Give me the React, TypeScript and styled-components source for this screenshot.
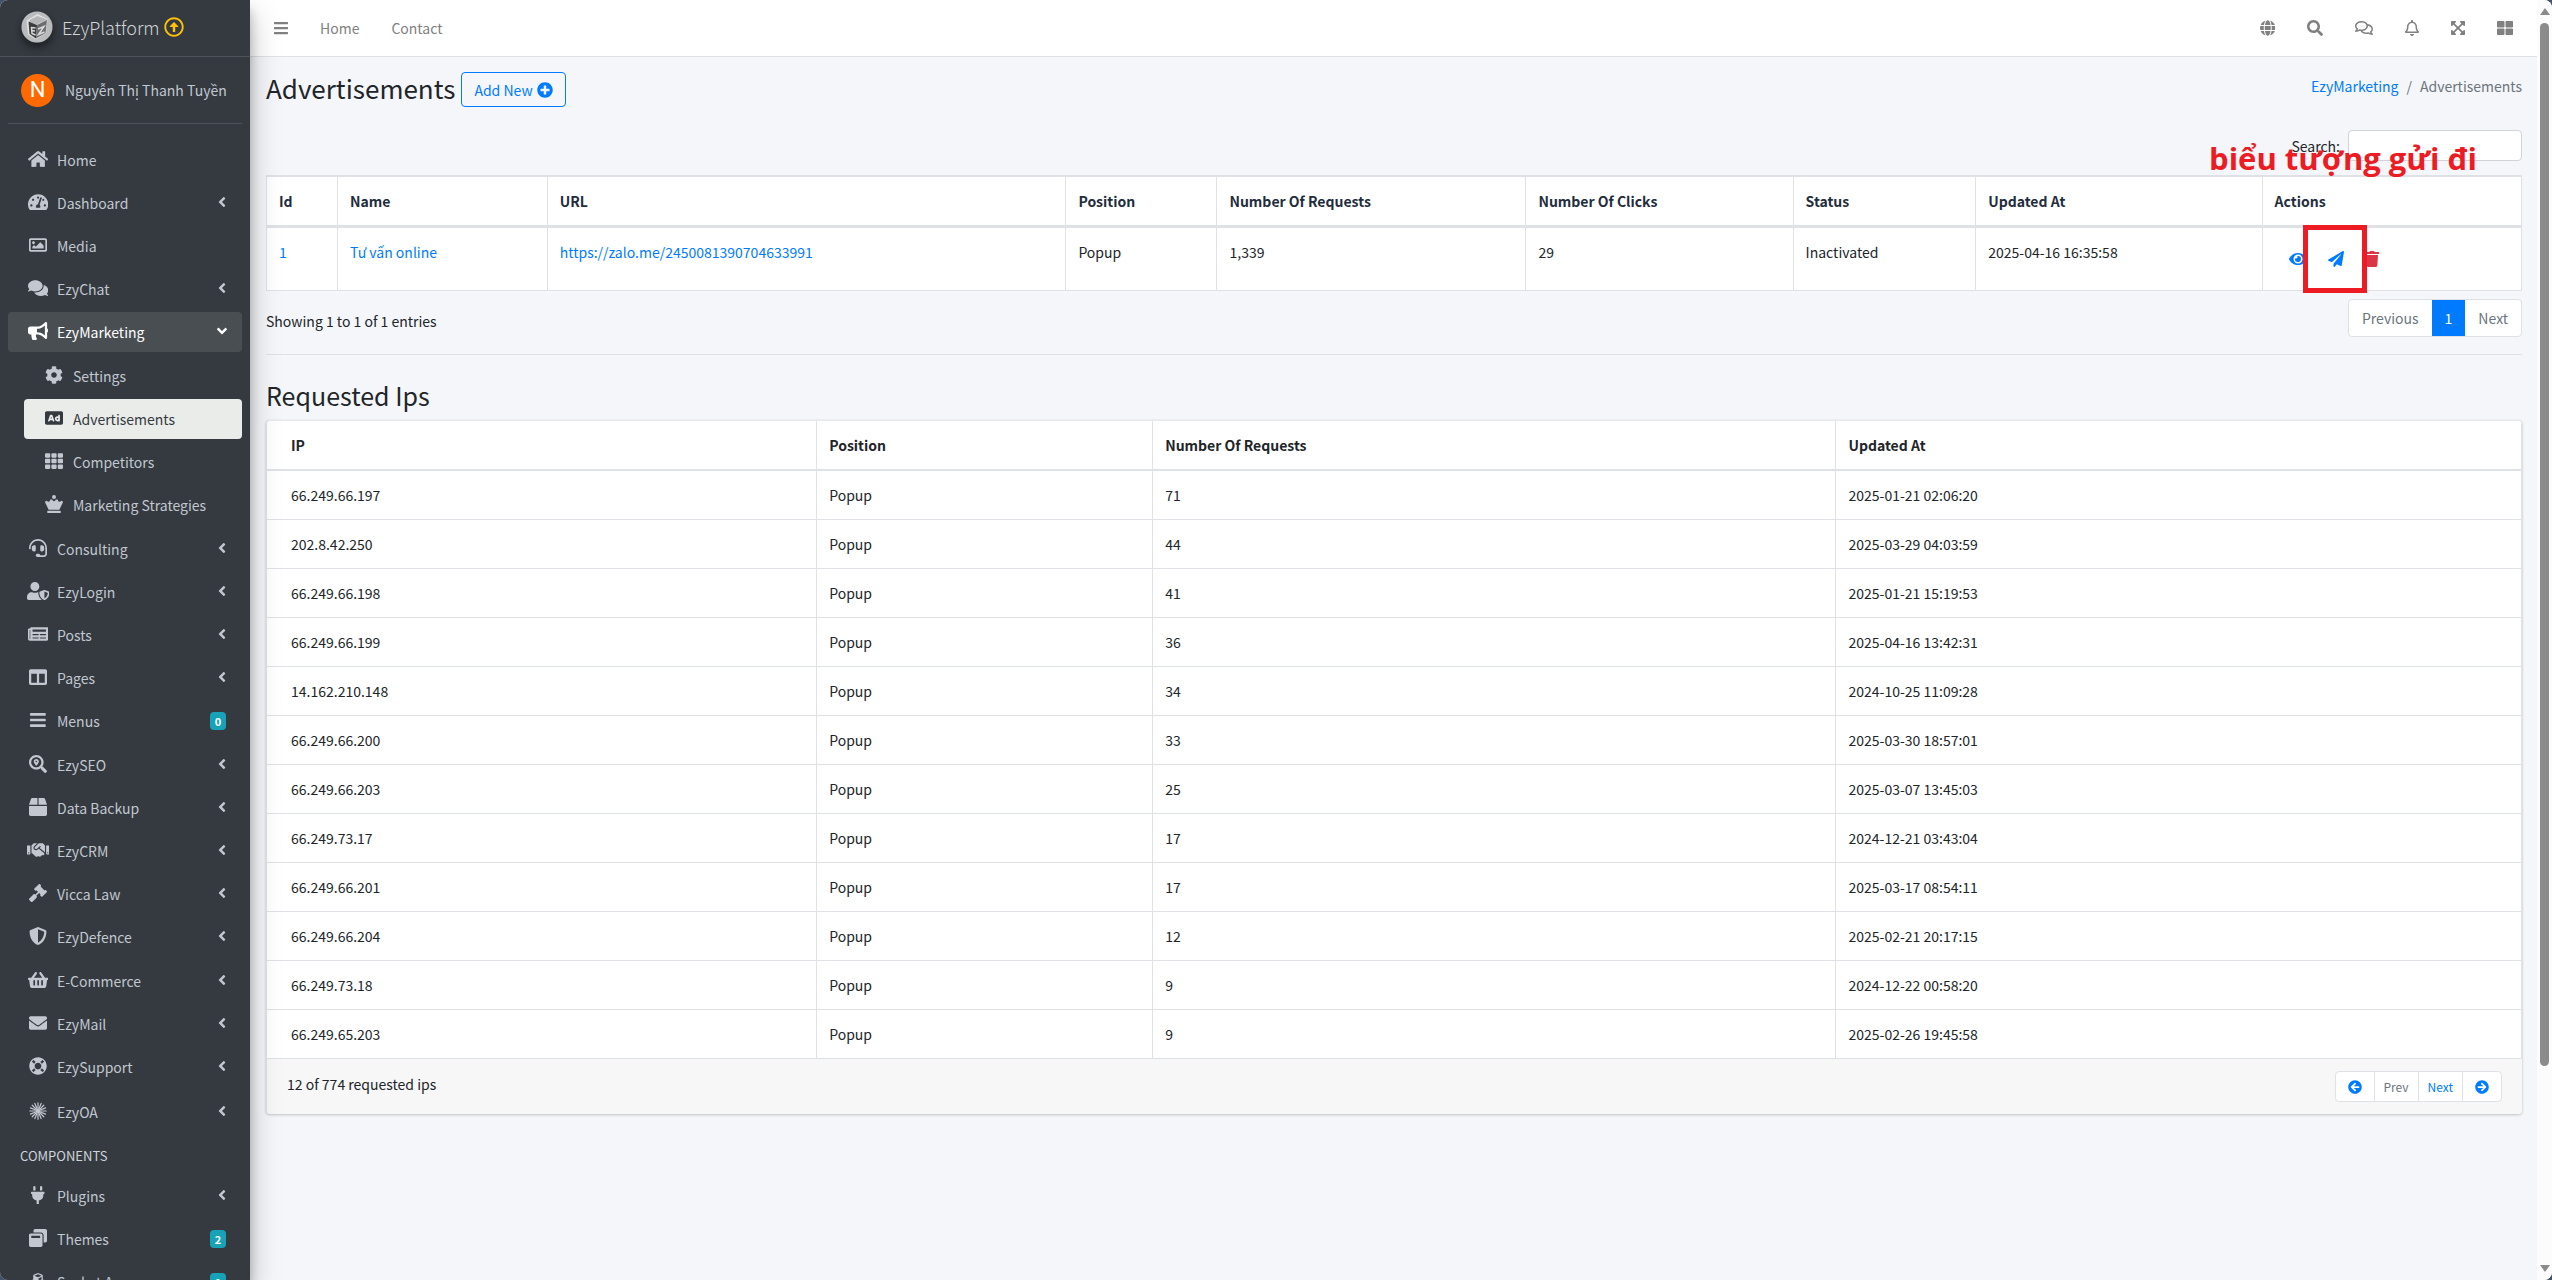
import React from 'react';
import styled, { createGlobalStyle, css } from 'styled-components';
import { IconContext } from 'react-icons';
import type { IconType } from 'react-icons';
import {
  FaAd, FaAngleLeft, FaArrowCircleLeft, FaArrowCircleRight, FaBars, FaBox, FaBullhorn, FaChessQueen,
  FaCog, FaColumns, FaComments, FaCubes, FaEnvelope, FaExpandArrowsAlt, FaEye, FaGavel, FaGlobe,
  FaHandshake, FaHeadset, FaHome, FaLifeRing, FaNewspaper, FaPaperPlane, FaPlug, FaPlusCircle,
  FaRegArrowAltCircleUp, FaRegBell, FaRegComments, FaRegImage, FaSearch, FaSearchLocation, FaShieldAlt,
  FaShoppingBasket, FaTachometerAlt, FaTh, FaThLarge, FaTrash, FaUserShield, FaWindowRestore,
} from 'react-icons/fa';

const color = {
  desktop: '#42536b',
  sidebar: '#343a40',
  sidebarLine: '#4b545c',
  sidebarText: '#c2c7d0',
  page: '#f4f6f9',
  line: '#dee2e6',
  text: '#212529',
  muted: '#6c757d',
  primary: '#007bff',
  danger: '#dc3545',
  info: '#17a2b8',
  mark: '#ed1c24',
};

const Global = createGlobalStyle`
  *, *::before, *::after { box-sizing: border-box; }
  body {
    margin: 0;
    background: ${color.desktop};
    color: ${color.text};
    font-family: "Noto Sans CJK SC", "Noto Sans", sans-serif;
    font-size: 14px;
    line-height: 24px;
  }
  button, input { font: inherit; color: inherit; }
  a { color: ${color.primary}; text-decoration: none; }
  svg { display: block; width: auto; height: 1em; flex: none; }
  ul, ol { list-style: none; margin: 0; padding: 0; }
`;

const Shell = styled.div`
  display: grid;
  grid-template-columns: 250px minmax(0, 1fr) 15px;
  height: 100vh;
  overflow: hidden;
  border-radius: 8px;
  background: ${color.page};
`;

const Sidebar = styled.aside`
  z-index: 2;
  min-height: 0;
  overflow: hidden;
  background: ${color.sidebar};
  color: ${color.sidebarText};
  box-shadow: 0 14px 28px rgba(0, 0, 0, 0.25), 0 10px 10px rgba(0, 0, 0, 0.22);
  clip-path: inset(0 -60px 0 0);
`;

const Brand = styled.a`
  display: flex;
  align-items: center;
  height: 57px;
  padding: 0 0 2px 21px;
  border-bottom: 1px solid ${color.sidebarLine};
  color: #d2d4d6;
  font-size: 18px;
  font-weight: 300;
`;

const BrandLogo = styled.span`
  display: flex;
  margin-right: 9px;
  border-radius: 50%;
  box-shadow: 0 3px 6px rgba(0, 0, 0, 0.3), 0 6px 8px rgba(0, 0, 0, 0.2);
  font-size: 32px;
`;

const UpdateMark = styled.span`
  margin-left: 4px;
  color: #ffc107;
  font-size: 20px;
`;

const UserPanel = styled.div`
  display: flex;
  align-items: center;
  height: 67px;
  margin: 0 8px;
  padding-left: 13px;
  border-bottom: 1px solid ${color.sidebarLine};
`;

const Avatar = styled.span`
  display: grid;
  place-items: center;
  width: 33px;
  height: 33px;
  margin-right: 11px;
  border-radius: 50%;
  background: #ff6a00;
  color: #fff;
  font-family: Roboto, sans-serif;
  font-size: 22px;
`;

const UserName = styled.a`
  color: ${color.sidebarText};
  white-space: nowrap;
`;

const Menu = styled.ul`
  padding: 0 8px;
`;

const MainMenu = styled(Menu)`
  padding-top: 16px;
`;

const Item = styled.li`
  margin-bottom: 3px;
  &:nth-child(5n) { margin-bottom: 4px; }
`;

const Submenu = styled.ul`
  margin-top: 4px;
  padding-left: 16px;
`;

const MenuLink = styled.a<{ $state?: 'open' | 'active'; $tall?: boolean }>`
  display: flex;
  align-items: center;
  height: ${(p) => (p.$tall ? 44 : 40)}px;
  padding: 0 16px;
  border-radius: 4px;
  color: ${color.sidebarText};
  ${(p) => p.$state === 'open' && css`background: #494e53; color: #fff;`}
  ${(p) => p.$state === 'active' && css`background: #eaecea; color: ${color.sidebar};`}
`;

const MenuIcon = styled.span`
  display: flex;
  justify-content: center;
  width: 28px;
  margin-right: 5px;
  padding-bottom: 2px;
  font-size: 18px;
`;

const Chevron = styled.span<{ $down?: boolean }>`
  margin-left: auto;
  padding-bottom: 2px;
  font-size: 16px;
  svg { transform: rotate(${(p) => (p.$down ? -90 : 0)}deg); }
`;

const Badge = styled.span`
  display: grid;
  place-items: center;
  min-width: 16px;
  height: 18px;
  margin-left: auto;
  border-radius: 4px;
  background: ${color.info};
  color: #fff;
  font-size: 11px;
  font-weight: 700;
  line-height: 18px;
`;

const MenuHeading = styled.h2`
  margin: 0;
  padding: 7px 20px 8px;
  color: #d0d4db;
  font-size: 13px;
  font-weight: 400;
  line-height: 24px;
`;

const Main = styled.div`
  min-width: 0;
`;

const Topbar = styled.header`
  display: flex;
  align-items: center;
  justify-content: space-between;
  height: 57px;
  padding: 0 8px;
  border-bottom: 1px solid ${color.line};
  background: #fff;
`;

const TopNav = styled.nav`
  display: flex;
  align-items: center;
`;

const TopLink = styled.a`
  padding: 0 16px;
  color: #808080;
`;

const IconButton = styled.button`
  padding: 8px 16px;
  border: 0;
  background: none;
  color: #808080;
  font-size: 16px;
  cursor: pointer;
`;

const PageHead = styled.div`
  display: flex;
  align-items: flex-start;
  justify-content: space-between;
  padding: 15px 15px 0 16px;
`;

const TitleGroup = styled.div`
  display: flex;
  align-items: center;
  gap: 6px;
`;

const Title = styled.h1`
  margin: 0;
  padding-bottom: 3px;
  font-size: 26px;
  font-weight: 400;
  line-height: 32px;
`;

const OutlineButton = styled.button`
  display: flex;
  align-items: center;
  gap: 4px;
  height: 35px;
  padding: 0 12px;
  border: 1px solid ${color.primary};
  border-radius: 4px;
  background: transparent;
  color: ${color.primary};
  cursor: pointer;
  svg { height: 16px; }
`;

const Crumbs = styled.ol`
  display: flex;
  gap: 8px;
  padding-top: 2px;
  color: ${color.muted};
`;

const Content = styled.main`
  padding: 0 15px 0 16px;
`;

const SearchRow = styled.div`
  position: relative;
  display: flex;
  align-items: center;
  justify-content: flex-end;
  gap: 8px;
  padding: 23px 0 14px;
`;

const SearchInput = styled.input`
  width: 174px;
  height: 31px;
  padding: 4px 8px;
  border: 1px solid #ced4da;
  border-radius: 4px;
  background: #fff;
`;

const Note = styled.span`
  position: absolute;
  right: 45px;
  bottom: -5px;
  color: ${color.mark};
  font-family: "Open Sans", "Noto Sans", sans-serif;
  font-size: 31px;
  font-weight: 700;
  line-height: 44px;
  white-space: nowrap;
`;

const Table = styled.table`
  width: 100%;
  table-layout: fixed;
  border-collapse: separate;
  border-spacing: 0;
  background: #fff;
  th, td {
    padding: 12px;
    border-right: 1px solid ${color.line};
    text-align: left;
    vertical-align: top;
  }
  th { font-weight: 700; }
`;

const AdsTable = styled(Table)`
  border-left: 1px solid ${color.line};
  th {
    border-top: 2px solid ${color.line};
    border-bottom: 3px solid ${color.line};
    color: #1f2d3d;
  }
  td {
    height: 63px;
    border-bottom: 1px solid ${color.line};
  }
`;

const IpTable = styled(Table)`
  th { border-bottom: 2px solid ${color.line}; }
  td { border-bottom: 1px solid ${color.line}; }
  th:first-child, td:first-child { padding-left: 24px; }
`;

const Actions = styled.div`
  display: flex;
  padding: 11px 4px 0;
  gap: 1px;
`;

const ActionButton = styled.button<{ $danger?: boolean }>`
  position: relative;
  padding: 0 10px;
  border: 0;
  background: none;
  color: ${(p) => (p.$danger ? color.danger : color.primary)};
  font-size: 16px;
  cursor: pointer;
`;

const Highlight = styled.span`
  position: absolute;
  z-index: 1;
  inset: -26px -13px -26px -15px;
  border: 5px solid ${color.mark};
`;

const TableFoot = styled.div`
  display: flex;
  align-items: center;
  justify-content: space-between;
  padding: 8px 0 17px;
  border-bottom: 1px solid ${color.line};
`;

const EntryCount = styled.span`
  padding-top: 6px;
`;

const Pager = styled.div<{ $small?: boolean }>`
  display: flex;
  overflow: hidden;
  border: 1px solid ${color.line};
  border-radius: 4px;
  background: #fff;
  font-size: ${(p) => (p.$small ? 12 : 14)}px;
  button {
    height: ${(p) => (p.$small ? 29 : 36)}px;
    padding: 0 ${(p) => (p.$small ? 9 : 13)}px;
  }
  button + button { border-left: ${(p) => (p.$small ? 1 : 0)}px solid ${color.line}; }
`;

const PageButton = styled.button<{ $active?: boolean }>`
  border: 0;
  background: ${(p) => (p.$active ? color.primary : 'transparent')};
  color: ${(p) => (p.$active ? '#fff' : color.primary)};
  cursor: pointer;
  &:disabled { color: ${color.muted}; cursor: default; }
  svg { height: 14px; margin: 0 3px; }
`;

const SectionTitle = styled.h2`
  margin: 0;
  padding: 23px 0 8px;
  font-size: 25px;
  font-weight: 400;
  line-height: 34px;
`;

const Card = styled.section`
  overflow: hidden;
  border-top: 1px solid #e6e9ed;
  border-left: 1px solid ${color.line};
  border-radius: 4px;
  background: #fff;
  box-shadow: 0 0 1px rgba(0, 0, 0, 0.13), 0 1px 3px rgba(0, 0, 0, 0.2);
`;

const CardFoot = styled.footer`
  display: flex;
  align-items: center;
  justify-content: space-between;
  padding: 12px 20px;
  background: #f7f7f7;
`;

const IpCount = styled.span`
  padding-bottom: 6px;
`;

const ScrollTrack = styled.div`
  display: flex;
  flex-direction: column;
  align-items: center;
  gap: 8px;
  padding: 8px 0;
  background: #fcfcfc;
`;

const ScrollArrow = styled.span<{ $down?: boolean }>`
  border: 5px solid transparent;
  border-${(p) => (p.$down ? 'top' : 'bottom')}: 7px solid #8b8b8b;
  border-${(p) => (p.$down ? 'bottom' : 'top')}: 0;
`;

const ScrollRail = styled.div`
  flex: 1;
  width: 9px;
`;

const ScrollThumb = styled.div`
  height: 84.5%;
  border-radius: 5px;
  background: #8b8b8b;
`;

const Logo = () => (
  <svg viewBox="0 0 32 32" aria-hidden="true">
    <circle cx="16" cy="16" r="15.5" fill="#b9bbbc" />
    <path d="M5.500 9.500 16.500 3 26.500 8 25 22 15 28.500 7 23.500Z" fill="#e0e1e2" />
    <path d="M9.500 8.500 16.500 5 26 8.500 16 13.500 8 11Z" fill="#b4b6b7" />
    <path d="M7.500 10.500 16 14 15 27.500 8.500 23Z" fill="#3b3d3f" />
    <path d="M16 14 26 9 24.500 22 15 27.500Z" fill="#6b6d6f" />
    <path d="M14.500 17 10.500 16.500 11 22.500l3.500 1.500M11 19.500l3 .5M17 18l6-2.500-5.500 8 6-2.500" fill="none" stroke="#d9dadb" strokeWidth="1.500" />
  </svg>
);

const Burst = () => (
  <svg viewBox="0 0 18 18" aria-hidden="true" stroke="currentColor" strokeWidth="1.200" strokeLinecap="round">
    {[0, 22.5, 45, 67.5, 90, 112.5, 135, 157.5].map((a) => (
      <path key={a} d="M9 .8V6.500M9 11.500V17.200M9 7.500V10.500" transform={`rotate(${a} 9 9)`} />
    ))}
  </svg>
);

type Entry = {
  label: string;
  icon: IconType | (() => React.JSX.Element);
  badge?: number;
  plain?: boolean;
  tall?: boolean;
  open?: boolean;
};

const entries: Entry[] = [
  { label: 'Home', icon: FaHome, plain: true },
  { label: 'Dashboard', icon: FaTachometerAlt },
  { label: 'Media', icon: FaRegImage, plain: true },
  { label: 'EzyChat', icon: FaComments },
  { label: 'EzyMarketing', icon: FaBullhorn, open: true },
  { label: 'Consulting', icon: FaHeadset },
  { label: 'EzyLogin', icon: FaUserShield },
  { label: 'Posts', icon: FaNewspaper },
  { label: 'Pages', icon: FaColumns },
  { label: 'Menus', icon: FaBars, badge: 0 },
  { label: 'EzySEO', icon: FaSearchLocation },
  { label: 'Data Backup', icon: FaBox },
  { label: 'EzyCRM', icon: FaHandshake },
  { label: 'Vicca Law', icon: FaGavel },
  { label: 'EzyDefence', icon: FaShieldAlt },
  { label: 'E-Commerce', icon: FaShoppingBasket },
  { label: 'EzyMail', icon: FaEnvelope },
  { label: 'EzySupport', icon: FaLifeRing },
  { label: 'EzyOA', icon: Burst, tall: true },
];

const marketing: Entry[] = [
  { label: 'Settings', icon: FaCog },
  { label: 'Advertisements', icon: FaAd },
  { label: 'Competitors', icon: FaTh },
  { label: 'Marketing Strategies', icon: FaChessQueen },
];

const componentEntries: Entry[] = [
  { label: 'Plugins', icon: FaPlug },
  { label: 'Themes', icon: FaWindowRestore, badge: 2 },
  { label: 'Socket Apps', icon: FaCubes, badge: 1 },
];

const MenuEntry = ({ entry }: { entry: Entry }) => {
  const Icon = entry.icon;
  return (
    <Item>
      <MenuLink href="#" $state={entry.open ? 'open' : undefined} $tall={entry.tall}>
        <MenuIcon><Icon /></MenuIcon>
        {entry.label}
        {entry.badge !== undefined && <Badge>{entry.badge}</Badge>}
        {entry.badge === undefined && !entry.plain && <Chevron $down={entry.open}><FaAngleLeft /></Chevron>}
      </MenuLink>
      {entry.open && (
        <Submenu>
          {marketing.map((sub) => (
            <Item key={sub.label}>
              <MenuLink href="#" $state={sub.label === 'Advertisements' ? 'active' : undefined}>
                <MenuIcon><sub.icon /></MenuIcon>
                {sub.label}
              </MenuLink>
            </Item>
          ))}
        </Submenu>
      )}
    </Item>
  );
};

const tools: [string, IconType][] = [
  ['Language', FaGlobe],
  ['Search', FaSearch],
  ['Messages', FaRegComments],
  ['Notifications', FaRegBell],
  ['Fullscreen', FaExpandArrowsAlt],
  ['Panels', FaThLarge],
];

const adColumns: [string, string][] = [
  ['Id', '3.15%'],
  ['Name', '9.3%'],
  ['URL', '23%'],
  ['Position', '6.7%'],
  ['Number Of Requests', '13.7%'],
  ['Number Of Clicks', '11.85%'],
  ['Status', '8.1%'],
  ['Updated At', '12.7%'],
  ['Actions', '11.5%'],
];

const ipColumns: [string, string][] = [
  ['IP', '24.4%'],
  ['Position', '14.9%'],
  ['Number Of Requests', '30.3%'],
  ['Updated At', '30.4%'],
];

const ips: [string, number, string][] = [
  ['66.249.66.197', 71, '2025-01-21 02:06:20'],
  ['202.8.42.250', 44, '2025-03-29 04:03:59'],
  ['66.249.66.198', 41, '2025-01-21 15:19:53'],
  ['66.249.66.199', 36, '2025-04-16 13:42:31'],
  ['14.162.210.148', 34, '2024-10-25 11:09:28'],
  ['66.249.66.200', 33, '2025-03-30 18:57:01'],
  ['66.249.66.203', 25, '2025-03-07 13:45:03'],
  ['66.249.73.17', 17, '2024-12-21 03:43:04'],
  ['66.249.66.201', 17, '2025-03-17 08:54:11'],
  ['66.249.66.204', 12, '2025-02-21 20:17:15'],
  ['66.249.73.18', 9, '2024-12-22 00:58:20'],
  ['66.249.65.203', 9, '2025-02-26 19:45:58'],
];

const Columns = ({ columns }: { columns: [string, string][] }) => (
  <>
    <colgroup>
      {columns.map(([name, width]) => <col key={name} style={{ width }} />)}
    </colgroup>
    <thead>
      <tr>{columns.map(([name]) => <th key={name} scope="col">{name}</th>)}</tr>
    </thead>
  </>
);

// An "auto" icon size lets each glyph keep its own aspect ratio at the font's height.
const iconSettings = { size: 'auto' };

export default function App() {
  return (
    <IconContext.Provider value={iconSettings}>
      <Global />
      <Shell>
        <Sidebar>
          <Brand href="#">
            <BrandLogo><Logo /></BrandLogo>
            EzyPlatform
            <UpdateMark><FaRegArrowAltCircleUp /></UpdateMark>
          </Brand>
          <UserPanel>
            <Avatar>N</Avatar>
            <UserName href="#">Nguyễn Thị Thanh Tuyền</UserName>
          </UserPanel>
          <nav>
            <MainMenu>{entries.map((e) => <MenuEntry key={e.label} entry={e} />)}</MainMenu>
            <MenuHeading>COMPONENTS</MenuHeading>
            <Menu>{componentEntries.map((e) => <MenuEntry key={e.label} entry={e} />)}</Menu>
          </nav>
        </Sidebar>
        <Main>
          <Topbar>
            <TopNav>
              <IconButton aria-label="Toggle menu"><FaBars /></IconButton>
              <TopLink href="#">Home</TopLink>
              <TopLink href="#">Contact</TopLink>
            </TopNav>
            <TopNav>
              {tools.map(([name, Icon]) => (
                <IconButton key={name} aria-label={name}><Icon /></IconButton>
              ))}
            </TopNav>
          </Topbar>
          <PageHead>
            <TitleGroup>
              <Title>Advertisements</Title>
              <OutlineButton>Add New <FaPlusCircle /></OutlineButton>
            </TitleGroup>
            <Crumbs>
              <li><a href="#">EzyMarketing</a></li>
              <li>/</li>
              <li>Advertisements</li>
            </Crumbs>
          </PageHead>
          <Content>
            <SearchRow>
              <label htmlFor="search">Search:</label>
              <SearchInput id="search" type="search" />
              <Note>biểu tượng gửi đi</Note>
            </SearchRow>
            <AdsTable>
              <Columns columns={adColumns} />
              <tbody>
                <tr>
                  <td><a href="#">1</a></td>
                  <td><a href="#">Tư vấn online</a></td>
                  <td><a href="#">https://zalo.me/2450081390704633991</a></td>
                  <td>Popup</td>
                  <td>1,339</td>
                  <td>29</td>
                  <td>Inactivated</td>
                  <td>2025-04-16 16:35:58</td>
                  <td>
                    <Actions>
                      <ActionButton aria-label="View"><FaEye /></ActionButton>
                      <ActionButton aria-label="Send"><FaPaperPlane /><Highlight /></ActionButton>
                      <ActionButton aria-label="Delete" $danger><FaTrash /></ActionButton>
                    </Actions>
                  </td>
                </tr>
              </tbody>
            </AdsTable>
            <TableFoot>
              <EntryCount>Showing 1 to 1 of 1 entries</EntryCount>
              <Pager>
                <PageButton disabled>Previous</PageButton>
                <PageButton $active>1</PageButton>
                <PageButton disabled>Next</PageButton>
              </Pager>
            </TableFoot>
            <SectionTitle>Requested Ips</SectionTitle>
            <Card>
              <IpTable>
                <Columns columns={ipColumns} />
                <tbody>
                  {ips.map(([ip, count, updated]) => (
                    <tr key={ip}>
                      <td>{ip}</td>
                      <td>Popup</td>
                      <td>{count}</td>
                      <td>{updated}</td>
                    </tr>
                  ))}
                </tbody>
              </IpTable>
              <CardFoot>
                <IpCount>12 of 774 requested ips</IpCount>
                <Pager $small>
                  <PageButton aria-label="First page"><FaArrowCircleLeft /></PageButton>
                  <PageButton disabled>Prev</PageButton>
                  <PageButton>Next</PageButton>
                  <PageButton aria-label="Last page"><FaArrowCircleRight /></PageButton>
                </Pager>
              </CardFoot>
            </Card>
          </Content>
        </Main>
        <ScrollTrack aria-hidden="true">
          <ScrollArrow />
          <ScrollRail><ScrollThumb /></ScrollRail>
          <ScrollArrow $down />
        </ScrollTrack>
      </Shell>
    </IconContext.Provider>
  );
}
